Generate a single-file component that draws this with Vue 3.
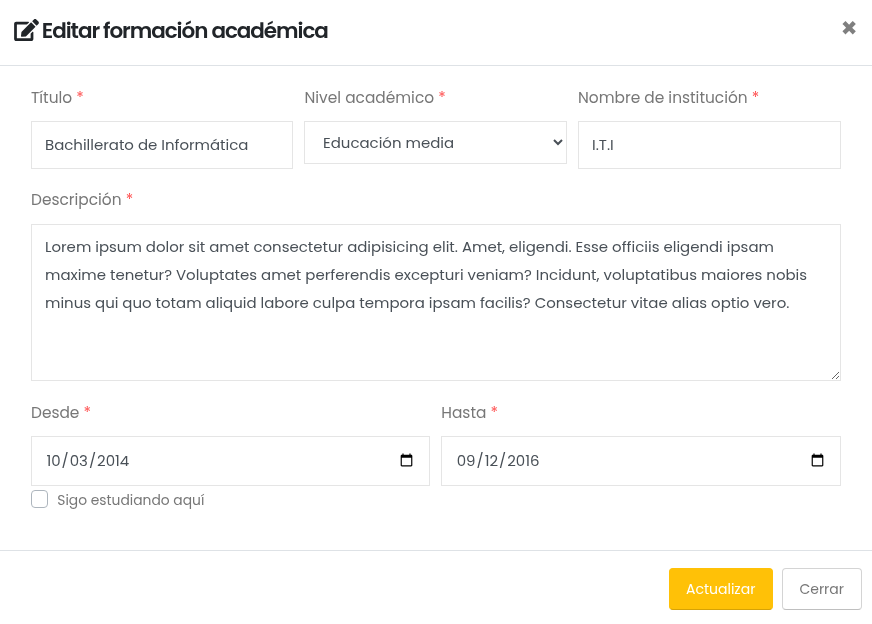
<script setup>
import { ref } from 'vue'

const title = ref('Bachillerato de Informática')
const level = ref('Educación media')
const school = ref('I.T.I')
const description = ref(
  'Lorem ipsum dolor sit amet consectetur adipisicing elit. Amet, eligendi. Esse officiis eligendi ipsam\nmaxime tenetur? Voluptates amet perferendis excepturi veniam? Incidunt, voluptatibus maiores nobis\nminus qui quo totam aliquid labore culpa tempora ipsam facilis? Consectetur vitae alias optio vero.'
)
const from = ref('2014-10-03')
const until = ref('2016-09-12')
const studying = ref(false)
</script>

<template>
  <div class="modal">
    <header class="head">
      <h5 class="heading">
        <svg class="edit" viewBox="0 0 576 512" aria-hidden="true">
          <path fill="currentColor" d="M402.6 83.2l90.2 90.2c3.8 3.8 3.8 10 0 13.8L274.4 405.6l-92.8 10.3c-12.4 1.4-22.9-9.1-21.5-21.5l10.3-92.8L388.8 83.2c3.8-3.8 10-3.8 13.8 0zm162-22.9l-48.8-48.8c-15.2-15.2-39.9-15.2-55.2 0l-35.4 35.4c-3.8 3.8-3.8 10 0 13.8l90.2 90.2c3.8 3.8 10 3.8 13.8 0l35.4-35.4c15.2-15.3 15.2-40 0-55.2zM384 346.2V448H64V128h229.8c3.2 0 6.2-1.3 8.5-3.5l40-40c7.6-7.6 2.2-20.5-8.5-20.5H48C21.5 64 0 85.5 0 112v352c0 26.5 21.5 48 48 48h352c26.5 0 48-21.5 48-48V306.2c0-10.7-12.9-16-20.5-8.5l-40 40c-2.2 2.3-3.5 5.3-3.5 8.5z" />
        </svg>
        <span>Editar formación académica</span>
      </h5>
      <button class="close" type="button">✖</button>
    </header>

    <form class="body">
      <div class="row three">
        <div class="field">
          <label class="label">Título <b>*</b></label>
          <input v-model="title" class="control" type="text" />
        </div>
        <div class="field">
          <label class="label">Nivel académico <b>*</b></label>
          <select v-model="level" class="control select">
            <option>Educación media</option>
          </select>
        </div>
        <div class="field">
          <label class="label">Nombre de institución <b>*</b></label>
          <input v-model="school" class="control" type="text" />
        </div>
      </div>

      <div class="field desc">
        <label class="label">Descripción <b>*</b></label>
        <textarea v-model="description" class="control area" spellcheck="false"></textarea>
      </div>

      <div class="row two">
        <div class="field">
          <label class="label">Desde <b>*</b></label>
          <input v-model="from" class="control date" type="date" />
          <label class="check">
            <input v-model="studying" class="box" type="checkbox" />
            <span>Sigo estudiando aquí</span>
          </label>
        </div>
        <div class="field">
          <label class="label">Hasta <b>*</b></label>
          <input v-model="until" class="control date" type="date" />
        </div>
      </div>
    </form>

    <footer class="foot">
      <button class="btn primary" type="button">Actualizar</button>
      <button class="btn plain" type="button">Cerrar</button>
    </footer>
  </div>
</template>

<style>
body {
  background: #fff;
}
</style>

<style scoped>
.modal,
.modal * {
  box-sizing: border-box;
}
.modal {
  display: flex;
  flex-direction: column;
  height: 624px;
  overflow: hidden;
  color: #777;
  font-family: Poppins, Inter, sans-serif;
  will-change: transform, opacity;
}
.head {
  display: flex;
  justify-content: space-between;
  height: 66px;
  padding: 16px 14.6px 0 14.3px;
  border-bottom: 1px solid #dee2e6;
}
.heading {
  display: flex;
  gap: 2.5px;
  height: 28px;
  margin: 0;
  color: #212529;
  font-size: 21.5px;
  font-weight: 600;
  line-height: 30px;
  letter-spacing: -1.06px;
  white-space: nowrap;
}
.edit {
  width: 25px;
  height: 22px;
  margin-top: 3px;
}
.close {
  height: 24px;
  padding: 0;
  border: 0;
  background: none;
  color: #7f7f7f;
  font: 20px/24px "DejaVu Sans", sans-serif;
}
.body {
  height: 484px;
  padding: 20px 31px 0;
}
.row {
  display: grid;
  column-gap: 11px;
}
.three {
  grid-template-columns: 262.4px 262.4px 263px;
  column-gap: 11.1px;
  height: 102px;
}
.two {
  grid-template-columns: 399.3px 399.4px;
}
.desc {
  height: 213px;
}
.field {
  display: flex;
  flex-direction: column;
}
.label {
  height: 24px;
  margin-bottom: 11px;
  font-size: 15.4px;
  line-height: 24px;
  white-space: nowrap;
}
.desc .label {
  margin-bottom: 12px;
}
.label b {
  color: #ff5252;
  font-weight: 400;
}
.control {
  width: 100%;
  height: 48px;
  margin: 0;
  padding: 0 13px 1px;
  border: 1px solid #e5e5e5;
  border-radius: 0;
  outline: 0;
  background: transparent;
  color: #495057;
  font-family: inherit;
  font-size: 14.96px;
}
.select {
  height: 43px;
  padding: 0 0 0 13.6px;
}
.area {
  height: 157px;
  padding: 8px 13px;
  overflow: hidden;
  line-height: 28px;
  white-space: pre;
  resize: vertical;
}
.date {
  height: 50px;
  padding: 0 13px 0.5px 13.4px;
}
.check {
  display: flex;
  gap: 9.3px;
  height: 26px;
  padding-top: 4px;
  font-size: 13.85px;
  line-height: 20px;
}
.box {
  width: 17px;
  height: 18px;
  margin: 0;
  border: 1px solid #adb5bd;
  border-radius: 4px;
  background: transparent;
  appearance: none;
}
.foot {
  display: flex;
  justify-content: flex-end;
  gap: 9px;
  height: 74px;
  padding: 17px 10px 0;
  border-top: 1px solid #dee2e6;
}
.btn {
  height: 42px;
  padding: 0 0.6px 0 0;
  border: 1px solid #d4d4d4;
  border-bottom-color: #bfbfbf;
  border-radius: 4px;
  background: transparent;
  color: #777;
  font-family: inherit;
  font-size: 14px;
}
.primary {
  width: 104px;
  border-color: #ffc107;
  border-bottom-color: #d6a206;
  background: #ffc107;
  color: #fff;
}
.plain {
  width: 80px;
}
</style>
